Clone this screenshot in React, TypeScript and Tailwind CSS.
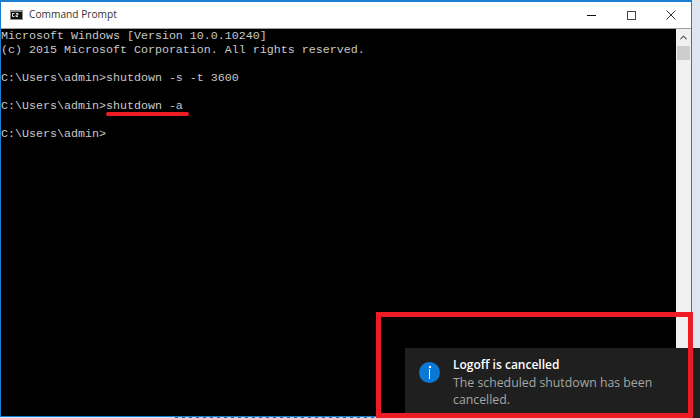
import { ChevronUp } from 'lucide-react'

const lines = [
  'Microsoft Windows [Version 10.0.10240]',
  '(c) 2015 Microsoft Corporation. All rights reserved.',
  '',
  'C:\\Users\\admin>shutdown -s -t 3600',
  '',
  'C:\\Users\\admin>shutdown -a',
  '',
  'C:\\Users\\admin>',
]

function CmdIcon() {
  return (
    <svg width="13" height="10" viewBox="0 0 13 10" className="shrink-0">
      <rect width="13" height="10" fill="#8f8f8f" />
      <rect x="1" y="2" width="11" height="7" fill="#111" />
      <path d="M4.5 3.5H2.5v3h2M6 3.5h2v1.5H6v1.5h2" stroke="#ddd" fill="none" />
    </svg>
  )
}

function Controls() {
  return (
    <div className="ml-auto flex items-center">
      <div className="flex h-[27px] w-[40px] items-center justify-center">
        <div className="h-[1px] w-[9px] bg-[#111]" />
      </div>
      <div className="flex h-[27px] w-[40px] items-center justify-center">
        <div className="h-[9px] w-[9px] border border-[#444]" />
      </div>
      <div className="flex h-[27px] w-[40px] items-center justify-center">
        <svg width="10" height="10" viewBox="0 0 10 10" stroke="#333" strokeWidth="1">
          <path d="M0.5 0.5l9 9M9.5 0.5l-9 9" />
        </svg>
      </div>
    </div>
  )
}

export default function App() {
  return (
    <div className="relative h-[418px] w-[700px] overflow-hidden bg-[#dde6ee] font-['Liberation_Sans',sans-serif]">
      <div className="flex h-[417px] w-[692px] flex-col border border-t-2 border-[#1a7fd0] bg-white">
        <div className="flex h-[26px] shrink-0 items-center pl-[9px]">
          <CmdIcon />
          <span className="ml-[6px] font-['Open_Sans',sans-serif] text-[10.2px] text-[#333]">Command Prompt</span>
          <Controls />
        </div>
        <div className="flex min-h-0 flex-1 border-t border-[#a0a0a0]">
          <div className="min-w-0 flex-1 bg-black font-['Liberation_Mono',monospace] text-[11.67px] leading-[14px] text-[#c8c8c8]">
            {lines.map((l, i) => (
              <div key={i} className="h-[14px] whitespace-pre">{l}</div>
            ))}
          </div>
          <div className="flex w-[15px] shrink-0 flex-col items-center bg-[#f0f0f0]">
            <ChevronUp size={11} strokeWidth={2.5} className="my-[3px] text-[#555]" />
            <div className="h-[14px] w-[13px] bg-[#cdcdcd]" />
          </div>
        </div>
      </div>

      {/* underline under the second command */}
      <div className="absolute top-[112px] left-[106px] h-[4px] w-[83px] rounded-full bg-[#ed1c24]" />

      {/* speckle of the page behind the window */}
      <div className="absolute top-[417px] left-[175px] h-[1px] w-[201px] bg-[repeating-linear-gradient(90deg,#2f5f8a_0px,#2f5f8a_3px,#b9cfe2_3px,#b9cfe2_7px)]" />

      {/* toast */}
      <div className="absolute top-[348px] left-[405px] flex h-[70px] w-[295px] bg-[#1f1f1f] pl-[14px]">
        <div className="mt-[14px] flex h-[21px] w-[21px] flex-col items-center justify-center gap-[1px] rounded-full bg-[#0a78d7]">
          <div className="h-[2px] w-[2px] bg-white" />
          <div className="h-[10px] w-[1.5px] bg-white" />
        </div>
        <div className="ml-[13px] pt-[8px] font-['Open_Sans',sans-serif] leading-[17.5px]">
          <div className="text-[12px] font-semibold text-white">Logoff is cancelled</div>
          <div className="w-[235px] text-[12.3px] text-[#a6a6a6]">The scheduled shutdown has been cancelled.</div>
        </div>
      </div>

      {/* red highlight box */}
      <div className="absolute top-[312px] left-[376px] h-[106px] w-[317px] border-[5px] border-[#ed1c24]" />
    </div>
  )
}
